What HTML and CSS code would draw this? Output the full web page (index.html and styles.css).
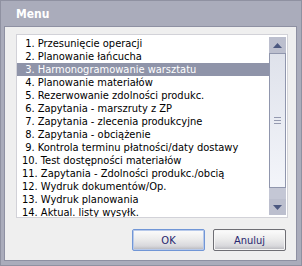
FILE: index.html
```
<!DOCTYPE html>
<html lang="pl">
<head>
    <meta charset="UTF-8">
    <title>Menu</title>
    <link rel="stylesheet" href="styles.css">
</head>
<body>
    <div class="window">
        <div class="titlebar">Menu</div>
        <div class="client">
            <!-- Lista opcji -->
            <div class="listbox">
                <ul class="items">
                    <li>&nbsp;1. Przesunięcie operacji</li>
                    <li>&nbsp;2. Planowanie łańcucha</li>
                    <li class="selected">&nbsp;3. Harmonogramowanie warsztatu</li>
                    <li>&nbsp;4. Planowanie materiałów</li>
                    <li>&nbsp;5. Rezerwowanie zdolności produkc.</li>
                    <li>&nbsp;6. Zapytania - marszruty z ZP</li>
                    <li>&nbsp;7. Zapytania - zlecenia produkcyjne</li>
                    <li>&nbsp;8. Zapytania - obciążenie</li>
                    <li>&nbsp;9. Kontrola terminu płatności/daty dostawy</li>
                    <li>10. Test dostępności materiałów</li>
                    <li>11. Zapytania - Zdolności produkc./obcią</li>
                    <li>12. Wydruk dokumentów/Op.</li>
                    <li>13. Wydruk planowania</li>
                    <li>14. Aktual. listy wysyłk.</li>
                </ul>
                <div class="scrollbar">
                    <div class="sb-btn">
                        <svg width="9" height="5" viewBox="0 0 9 5"><path d="M0 5 L4.5 0 L9 5 Z" fill="#4b5880"/></svg>
                    </div>
                    <div class="sb-thumb">
                        <span class="grip"></span>
                    </div>
                    <div class="sb-track"></div>
                    <div class="sb-btn">
                        <svg width="9" height="5" viewBox="0 0 9 5"><path d="M0 0 L9 0 L4.5 5 Z" fill="#4b5880"/></svg>
                    </div>
                </div>
            </div>

            <!-- Przyciski -->
            <div class="buttons">
                <button class="btn focused">OK</button>
                <button class="btn">Anuluj</button>
            </div>
        </div>
    </div>
</body>
</html>
```

FILE: styles.css
```
body {
    margin: 0;
    font-family: "DejaVu Sans Condensed", "DejaVu Sans", sans-serif;
    font-stretch: condensed;
    font-size: 11px;
}

.window {
    width: 302px;
    height: 266px;
    box-sizing: border-box;
    border: 1px solid #8f91a1;
    background-color: #aaacbb;
    padding: 0 4px 4px 3px;
    display: flex;
    flex-direction: column;
}

.titlebar {
    height: 25px;
    line-height: 26px;
    padding-left: 12px;
    color: #fff;
    font-weight: bold;
    font-size: 12px;
}

.client {
    flex: 1;
    border: 1px solid #8e90a2;
    background-color: #efefef;
}

.listbox {
    display: flex;
    width: 272px;
    height: 184px;
    box-sizing: border-box;
    margin: 7px 0 0 11px;
    border: 1px solid #d2d2d8;
    background-color: #fff;
}

.items {
    flex: 1;
    list-style: none;
    margin: 0;
    padding: 2px 0 0 0;
    overflow: hidden;
}

.items li {
    height: 13px;
    line-height: 14px;
    padding-left: 5px;
    color: #000;
    white-space: nowrap;
    overflow: hidden;
}

.items li.selected {
    background-color: #8f94a9;
    color: #fff;
}

.scrollbar {
    width: 17px;
    margin: 2px 1px 2px 0;
    display: flex;
    flex-direction: column;
}

.sb-btn {
    height: 16px;
    background-color: #bcbfce;
    display: flex;
    align-items: center;
    justify-content: center;
}

.sb-thumb {
    height: 133px;
    border: 1px solid #9096ad;
    background: linear-gradient(#dfe2eb, #f3f5fa);
    display: flex;
    align-items: center;
    justify-content: center;
}

.grip {
    width: 7px;
    height: 5px;
    border-top: 1px solid #959ab0;
    border-bottom: 1px solid #959ab0;
    position: relative;
}

.grip::after {
    content: "";
    position: absolute;
    left: 0;
    right: 0;
    top: 2px;
    border-top: 1px solid #959ab0;
}

.sb-track {
    flex: 1;
    background-color: #c4c7d5;
}

.buttons {
    display: flex;
    justify-content: flex-end;
    gap: 8px;
    margin: 11px 10px 0 0;
}

.btn {
    width: 73px;
    height: 22px;
    padding: 0;
    border: 1px solid #6e6e74;
    border-radius: 2px;
    background: linear-gradient(#fcfcfc, #ececec 45%, #d8d8dc 80%, #b4b4ba);
    box-shadow: inset 0 0 0 1px #f6f6f6;
    color: #26266e;
    font-family: "DejaVu Sans Condensed", "DejaVu Sans", sans-serif;
    font-size: 11px;
    cursor: pointer;
}

.btn.focused {
    border-color: #7196d6;
    box-shadow: inset 0 0 0 1px #b7c9ea;
}
```
